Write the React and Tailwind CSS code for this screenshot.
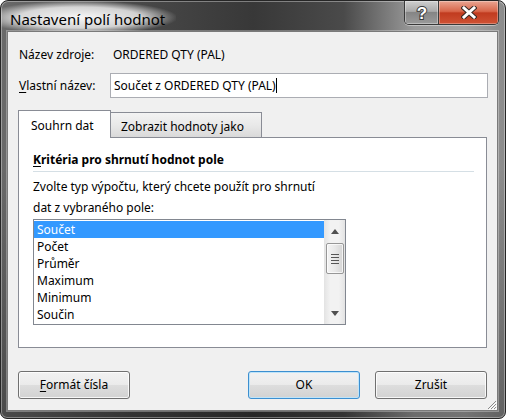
const items = ['Součet', 'Počet', 'Průměr', 'Maximum', 'Minimum', 'Součin'];

function WinButton({ children, primary }) {
  return (
    <button
      className={
        'flex h-[28px] w-[112px] items-center justify-center rounded-[3px] border text-[12px] leading-[16px] text-black bg-[linear-gradient(180deg,#f2f2f2_0%,#ebebeb_48%,#dddddd_52%,#d2d2d2_100%)] ' +
        (primary
          ? 'border-[#3c8fd0] shadow-[inset_0_0_0_1px_#bfe4f9]'
          : 'border-[#707070] shadow-[inset_0_0_0_1px_rgba(255,255,255,0.8)]')
      }
    >
      {children}
    </button>
  );
}

function ScrollBar() {
  return (
    <div className="flex w-[21px] flex-col items-center bg-[linear-gradient(90deg,#e3e3e3_0%,#f2f2f2_30%,#f2f2f2_70%,#e3e3e3_100%)]">
      <div className="flex h-[22px] items-center">
        <svg width="8" height="5" viewBox="0 0 8 5">
          <path d="M0 5 L4 0 L8 5 Z" fill="#505050" />
        </svg>
      </div>
      <div className="mt-[1px] flex h-[31px] w-[18px] flex-col items-center justify-center gap-[2px] rounded-[2px] border border-[#979797] bg-[linear-gradient(90deg,#f4f4f4_0%,#e8e8e8_50%,#d4d4d4_100%)] shadow-[inset_0_0_0_1px_rgba(255,255,255,0.7)]">
        <div className="h-px w-[8px] bg-[#555]" />
        <div className="h-px w-[8px] bg-[#555]" />
        <div className="h-px w-[8px] bg-[#555]" />
        <div className="h-px w-[8px] bg-[#555]" />
      </div>
      <div className="flex-1" />
      <div className="flex h-[22px] items-center">
        <svg width="8" height="5" viewBox="0 0 8 5">
          <path d="M0 0 L8 0 L4 5 Z" fill="#505050" />
        </svg>
      </div>
    </div>
  );
}

export default function App() {
  return (
    <div className="relative h-[419px] w-[506px] overflow-hidden rounded-t-[8px] rounded-b-[7px] border border-[#262626] font-['Noto_Sans',sans-serif] shadow-[inset_0_0_0_1px_rgba(255,255,255,0.35)] bg-[linear-gradient(180deg,rgba(0,0,0,0)_0%,rgba(0,0,0,0)_40%,rgba(0,0,0,0.3)_100%),linear-gradient(90deg,#6a6a6a_0%,#4a4a4a_25%,#383838_50%,#4a4a4a_68%,#9a9a9a_82%,#a4a4a4_92%,#8a8a8a_100%)]">
      {/* title bar */}
      <div className="flex h-[30px]">
        <div className="h-[30px] w-[175px] bg-[radial-gradient(ellipse_at_45%_55%,rgba(255,255,255,0.95)_0%,rgba(255,255,255,0.75)_45%,rgba(255,255,255,0)_72%)] pl-[9px] pt-[8px]">
          <div className="text-[15px] leading-[20px] text-black">Nastavení polí hodnot</div>
        </div>
        <div className="ml-auto mr-[6px] flex h-[24px] overflow-hidden rounded-b-[5px] border border-t-0 border-[#3a3a3a] shadow-[0_1px_0_rgba(255,255,255,0.4)]">
          <div className="flex w-[34px] items-center justify-center border-r border-[#3a3a3a] bg-[linear-gradient(180deg,#cfcfcf_0%,#a9a9a9_45%,#858585_50%,#9a9a9a_100%)] shadow-[inset_0_0_0_1px_rgba(255,255,255,0.35)]">
            <svg width="16" height="20" viewBox="0 0 16 20">
              <text x="8" y="16" textAnchor="middle" fontSize="17" fontWeight="bold" fontFamily="Liberation Sans, sans-serif" fill="#fff" stroke="#3a3a3a" strokeWidth="2" paintOrder="stroke">?</text>
            </svg>
          </div>
          <div className="flex w-[59px] items-center justify-center bg-[linear-gradient(180deg,#eaa592_0%,#d8664a_45%,#c13b1f_52%,#cf5234_100%)] shadow-[inset_0_0_0_1px_rgba(255,255,255,0.3)]">
            <svg width="16" height="13" viewBox="0 0 16 13">
              <path d="M3 2 L13 11 M13 2 L3 11" stroke="#3b2a25" strokeWidth="5" strokeLinecap="square" />
              <path d="M3 2 L13 11 M13 2 L3 11" stroke="#fff" strokeWidth="3" strokeLinecap="square" />
            </svg>
          </div>
        </div>
      </div>

      {/* client area */}
      <div className="relative ml-[6px] h-[380px] w-[491px] border border-[#7a7a7a] bg-[#f0f0f0] text-[12px] leading-[16px] text-black shadow-[0_0_0_1px_rgba(255,255,255,0.3)]">
        <div className="pl-[11px] pt-[15px]">
          <div className="flex h-[16px] items-center">
            <span className="w-[94px]">Název zdroje:</span>
            <span>ORDERED QTY (PAL)</span>
          </div>
          <div className="mt-[10px] flex h-[25px] items-center">
            <span className="w-[91px]">
              <span className="underline underline-offset-[2px]">V</span>lastní název:
            </span>
            <div className="flex h-[25px] w-[378px] items-center border border-[#abadb3] bg-white pl-[3px]">
              <span>Součet z ORDERED QTY (PAL)</span>
              <span className="h-[15px] w-px bg-black" />
            </div>
          </div>
        </div>

        <div className="ml-[10px] mt-[12px]">
          <div className="flex h-[27px] items-end">
            <div className="relative z-10 mb-[-1px] h-[28px] w-[93px] border border-b-0 border-[#898c95] bg-white pl-[12px] pt-[7px]">
              Souhrn dat
            </div>
            <div className="-ml-px h-[25px] w-[152px] border border-b-0 border-[#898c95] bg-[linear-gradient(180deg,#f3f3f3_0%,#e9e9e9_50%,#d9d9d9_100%)] pl-[10px] pt-[6px]">
              Zobrazit hodnoty jako
            </div>
          </div>
          <div className="h-[211px] w-[469px] border border-[#898c95] bg-white">
            <div className="pl-[14px] pt-[14px] font-bold">
              <span className="underline underline-offset-[2px]">K</span>ritéria pro shrnutí hodnot pole
            </div>
            <div className="ml-[14px] mt-[3px] h-px w-[441px] bg-[#d5dfe5]" />
            <div className="ml-[14px] mt-[4px] leading-[21px]">
              Zvolte typ výpočtu, který chcete použít pro shrnutí
              <br />
              dat z vybraného pole:
            </div>
            <div className="ml-[14px] mt-[1px] flex h-[106px] w-[313px] border border-[#828790] bg-white">
              <div className="w-[290px] pt-[1px]">
                {items.map((item, i) => (
                  <div
                    key={item}
                    className={
                      'flex h-[17px] items-center pl-[3px] ' +
                      (i === 0 ? 'bg-[#3399ff] text-white' : 'text-black')
                    }
                  >
                    {item}
                  </div>
                ))}
              </div>
              <ScrollBar />
            </div>
          </div>
        </div>

        <div className="ml-[10px] mt-[23px] flex">
          <WinButton>
            <span>
              <span className="underline underline-offset-[2px]">F</span>ormát čísla
            </span>
          </WinButton>
          <div className="ml-[118px] flex gap-[15px]">
            <WinButton primary>OK</WinButton>
            <WinButton>Zrušit</WinButton>
          </div>
        </div>

        {/* resize grip */}
        <svg className="absolute bottom-0 right-0" width="11" height="11" viewBox="0 0 11 11">
          <path d="M10 2 L2 10 M10 5 L5 10 M10 8 L8 10" stroke="#8a8a8a" strokeWidth="1" />
          <path d="M11 3 L3 11 M11 6 L6 11 M11 9 L9 11" stroke="#ffffff" strokeWidth="1" />
        </svg>
      </div>
    </div>
  );
}
